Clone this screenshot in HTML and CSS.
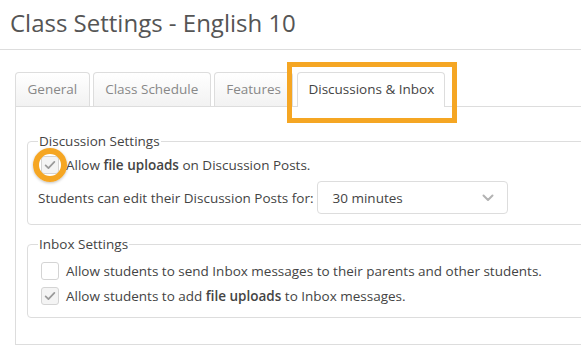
FILE: index.html
```html
<!DOCTYPE html>
<html lang="en">
<head>
    <meta charset="UTF-8">
    <meta name="viewport" content="width=device-width, initial-scale=1.0">
    <title>Class Settings - English 10</title>
    <link rel="stylesheet" href="styles.css">
</head>
<body>
    <h1 class="page-title">Class Settings - English 10</h1>

    <div class="panel">
        <ul class="tabs">
            <li class="tab">General</li>
            <li class="tab">Class Schedule</li>
            <li class="tab">Features</li>
            <li class="tab active">
                Discussions &amp; Inbox
                <span class="highlight-box"></span>
            </li>
        </ul>

        <div class="panel-body">
            <fieldset class="group">
                <legend>Discussion Settings</legend>
                <div class="rows">
                    <label class="check-row">
                        <span class="checkbox checked">
                            <svg viewBox="0 0 16 16" width="14" height="14"><path d="M3 8.5l3.2 3L13 4.5" fill="none" stroke="#9a9a9a" stroke-width="2" stroke-linecap="round" stroke-linejoin="round"/></svg>
                            <span class="highlight-ring"></span>
                        </span>
                        <span>Allow <b>file uploads</b> on Discussion Posts.</span>
                    </label>
                    <div class="select-row">
                        <span>Students can edit their Discussion Posts for:</span>
                        <div class="select">
                            <span>30 minutes</span>
                            <svg viewBox="0 0 12 8" width="12" height="8"><path d="M1.5 1.5L6 6l4.5-4.5" fill="none" stroke="#b3b3b3" stroke-width="2" stroke-linecap="round" stroke-linejoin="round"/></svg>
                        </div>
                    </div>
                </div>
            </fieldset>

            <fieldset class="group">
                <legend>Inbox Settings</legend>
                <div class="rows rows-tight">
                    <label class="check-row">
                        <span class="checkbox"></span>
                        <span>Allow students to send Inbox messages to their parents and other students.</span>
                    </label>
                    <label class="check-row">
                        <span class="checkbox checked">
                            <svg viewBox="0 0 16 16" width="14" height="14"><path d="M3 8.5l3.2 3L13 4.5" fill="none" stroke="#9a9a9a" stroke-width="2" stroke-linecap="round" stroke-linejoin="round"/></svg>
                        </span>
                        <span>Allow students to add <b>file uploads</b> to Inbox messages.</span>
                    </label>
                </div>
            </fieldset>
        </div>
    </div>
</body>
</html>
```

FILE: styles.css
```css
body {
    margin: 0;
    font-family: 'Open Sans', sans-serif;
    font-size: 13.5px;
    color: #444;
    background: #fff;
    overflow: hidden;
}

b {
    font-weight: 600;
}

.page-title {
    margin: 0;
    padding: 6px 10px 10px;
    font-size: 24px;
    font-weight: 400;
    color: #555;
    border-bottom: 1px solid #ddd;
}

.panel {
    margin: 22px 0 0 15px;
    width: 640px;
}

.tabs {
    display: flex;
    gap: 3px;
    margin: 0;
    padding: 0;
    list-style: none;
    border-bottom: 1px solid #ddd;
}

.tab {
    position: relative;
    padding: 7px 11.5px;
    line-height: 19px;
    border: 1px solid #ddd;
    border-bottom: none;
    border-radius: 4px 4px 0 0;
    background: linear-gradient(#fff, #f2f2f2);
    color: #888;
}

.tab.active {
    background: #fff;
    color: #444;
    margin-left: 1px;
    margin-bottom: -1px;
    padding: 7px 10px 8px;
}

.highlight-box {
    position: absolute;
    left: -11px;
    top: -11px;
    right: -13px;
    bottom: -16px;
    border: 5px solid #f5a623;
}

.panel-body {
    border: 1px solid #ddd;
    border-top: none;
    padding: 25px 11px 26px;
}

.group {
    margin: 0;
    padding: 0 10px 10px;
    border: 1px solid #ddd;
    border-radius: 4px;
}

.group + .group {
    margin-top: 10px;
}

.group legend {
    padding: 0 1px;
    line-height: 19px;
    color: #444;
}

.rows {
    display: flex;
    flex-direction: column;
    gap: 5px;
    margin-top: 3px;
}

.rows-tight {
    gap: 3px;
    margin-top: 6px;
}

.check-row {
    display: flex;
    align-items: center;
    gap: 7px;
    height: 22px;
}

.checkbox {
    position: relative;
    display: flex;
    align-items: center;
    justify-content: center;
    width: 18px;
    height: 18px;
    margin-left: 3px;
    border: 1px solid #d4d4d4;
    border-radius: 3px;
    background: #fff;
    box-sizing: border-box;
}

.checkbox.checked {
    background: #f4f4f4;
}

.highlight-ring {
    position: absolute;
    left: 50%;
    top: 50%;
    width: 34px;
    height: 34px;
    margin: -17px 0 0 -17px;
    border: 6px solid #f5a623;
    border-radius: 50%;
    box-sizing: border-box;
    box-shadow: 0 1px 3px rgba(0, 0, 0, 0.25);
}

.select-row {
    display: flex;
    align-items: center;
    gap: 3px;
}

.select {
    display: flex;
    align-items: center;
    justify-content: space-between;
    width: 191px;
    height: 33px;
    padding: 0 13px 0 15px;
    border: 1px solid #ddd;
    border-radius: 4px;
    box-sizing: border-box;
}
```
